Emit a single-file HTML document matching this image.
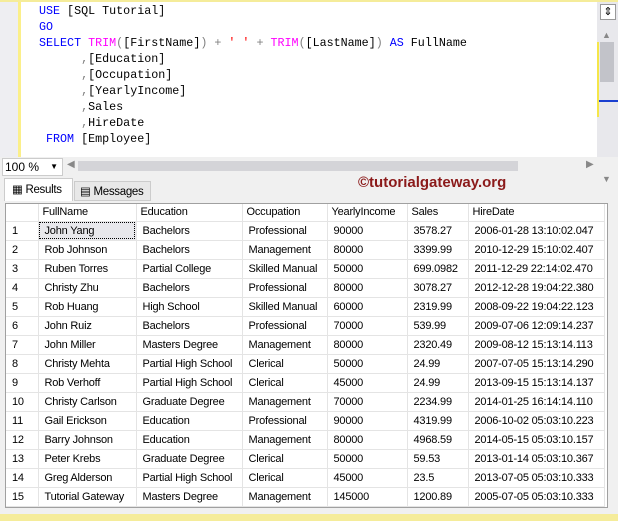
<!DOCTYPE html><html><head><style>
body{margin:0;width:618px;height:521px;overflow:hidden;background:#f0f0f0;font-family:"Liberation Sans",sans-serif;position:relative}
.ed{position:absolute;left:0;top:0;width:618px;height:157px;background:#fff;border-top:2px solid #f5ec9a;box-sizing:border-box}
.gut{position:absolute;left:0;top:0;width:18px;height:157px;background:#eeeef2}
.ybar{position:absolute;left:18px;top:0;width:3px;height:157px;background:#fbef8a}
.code{position:absolute;left:39px;top:1px;font:11.7px/16px "Liberation Mono",monospace;color:#000;white-space:pre}
.k{color:#0000ff}.f{color:#ff00ff}.g{color:#808080}.s{color:#ff0000}
.vs{position:absolute;left:597px;top:0;width:21px;height:157px;background:#e8e8ec}
.zb{position:absolute;top:157px;left:0;width:618px;height:19px;background:#f0f0f0}
.grid{position:absolute;left:5px;top:203px;width:603px;height:305px;background:#fff;border:1px solid #a0a0a0;box-sizing:border-box;overflow:hidden}
table{border-collapse:collapse;table-layout:fixed;width:598px;font-size:11px;letter-spacing:-0.2px;position:absolute;left:0;top:0}
td{height:19px;padding:0 0 0 6px;border-right:1px solid #e4e4e4;border-bottom:1px solid #e4e4e4;white-space:nowrap;overflow:hidden;box-sizing:border-box}
tr.h td{height:17px;padding-left:4px}
</style></head><body>
<div class="ed"><div class="gut"></div><div class="ybar"></div>
<div class="code"><span class="k">USE</span> [SQL Tutorial]
<span class="k">GO</span>
<span class="k">SELECT</span> <span class="f">TRIM</span><span class="g">(</span>[FirstName]<span class="g">)</span> <span class="g">+</span> <span class="s">' '</span> <span class="g">+</span> <span class="f">TRIM</span><span class="g">(</span>[LastName]<span class="g">)</span> <span class="k">AS</span> FullName
      <span class="g">,</span>[Education]
      <span class="g">,</span>[Occupation]
      <span class="g">,</span>[YearlyIncome]
      <span class="g">,</span>Sales
      <span class="g">,</span>HireDate
 <span class="k">FROM</span> [Employee]</div>
<div class="vs"><div style="position:absolute;left:3px;top:2px;width:14px;height:14px;border:1px solid #999;background:#fff;font-size:11px;text-align:center;line-height:14px">⇕</div>
<div style="position:absolute;left:5px;top:28px;font-size:9px;color:#888">▲</div>
<div style="position:absolute;left:3px;top:40px;width:14px;height:40px;background:#c2c3c9"></div>
<div style="position:absolute;left:0;top:40px;width:2px;height:75px;background:#f5e64a"></div>
<div style="position:absolute;left:2px;top:98px;width:19px;height:2px;background:#1a3fd0"></div>
<div style="position:absolute;left:5px;top:172px;font-size:9px;color:#888">▼</div></div>
</div>
<div class="zb"><div style="position:absolute;left:2px;top:1px;width:57px;height:16px;background:#fff;border:1px solid #ccc;font-size:12px;line-height:16px;padding-left:2px">100 %<span style="position:absolute;right:4px;font-size:8px">▼</span></div>
<div style="position:absolute;left:67px;top:2px;font-size:10px;color:#888">◀</div>
<div style="position:absolute;left:78px;top:4px;width:440px;height:10px;background:#d4d4d8"></div>
<div style="position:absolute;left:586px;top:2px;font-size:10px;color:#888">▶</div></div>
<div style="position:absolute;left:4px;top:178px;width:69px;height:23px;background:#fff;border:1px solid #ccc;border-bottom:none;font-size:11.5px;letter-spacing:-0.3px;line-height:22px;padding-left:7px;box-sizing:border-box">▦ Results</div>
<div style="position:absolute;left:74px;top:181px;width:77px;height:20px;background:#e8e8e8;border:1px solid #ccc;font-size:11.5px;letter-spacing:-0.3px;line-height:20px;padding-left:5px;box-sizing:border-box">▤ Messages</div>
<div style="position:absolute;left:358px;top:174px;font:bold 15px 'Liberation Sans',sans-serif;color:#8b1a1a">©tutorialgateway.org</div>
<div class="grid"><table>
<colgroup><col style="width:32px"><col style="width:98px"><col style="width:106px"><col style="width:85px"><col style="width:80px"><col style="width:61px"><col style="width:136px"></colgroup>
<tr class="h"><td></td><td>FullName</td><td>Education</td><td>Occupation</td><td>YearlyIncome</td><td>Sales</td><td>HireDate</td></tr>
<tr><td>1</td><td style="background:#e8e8ec;outline:1px dotted #000;outline-offset:-2px">John Yang</td><td>Bachelors</td><td>Professional</td><td>90000</td><td>3578.27</td><td>2006-01-28 13:10:02.047</td></tr>
<tr><td>2</td><td>Rob Johnson</td><td>Bachelors</td><td>Management</td><td>80000</td><td>3399.99</td><td>2010-12-29 15:10:02.407</td></tr>
<tr><td>3</td><td>Ruben Torres</td><td>Partial College</td><td>Skilled Manual</td><td>50000</td><td>699.0982</td><td>2011-12-29 22:14:02.470</td></tr>
<tr><td>4</td><td>Christy Zhu</td><td>Bachelors</td><td>Professional</td><td>80000</td><td>3078.27</td><td>2012-12-28 19:04:22.380</td></tr>
<tr><td>5</td><td>Rob Huang</td><td>High School</td><td>Skilled Manual</td><td>60000</td><td>2319.99</td><td>2008-09-22 19:04:22.123</td></tr>
<tr><td>6</td><td>John Ruiz</td><td>Bachelors</td><td>Professional</td><td>70000</td><td>539.99</td><td>2009-07-06 12:09:14.237</td></tr>
<tr><td>7</td><td>John Miller</td><td>Masters Degree</td><td>Management</td><td>80000</td><td>2320.49</td><td>2009-08-12 15:13:14.113</td></tr>
<tr><td>8</td><td>Christy Mehta</td><td>Partial High School</td><td>Clerical</td><td>50000</td><td>24.99</td><td>2007-07-05 15:13:14.290</td></tr>
<tr><td>9</td><td>Rob Verhoff</td><td>Partial High School</td><td>Clerical</td><td>45000</td><td>24.99</td><td>2013-09-15 15:13:14.137</td></tr>
<tr><td>10</td><td>Christy Carlson</td><td>Graduate Degree</td><td>Management</td><td>70000</td><td>2234.99</td><td>2014-01-25 16:14:14.110</td></tr>
<tr><td>11</td><td>Gail Erickson</td><td>Education</td><td>Professional</td><td>90000</td><td>4319.99</td><td>2006-10-02 05:03:10.223</td></tr>
<tr><td>12</td><td>Barry Johnson</td><td>Education</td><td>Management</td><td>80000</td><td>4968.59</td><td>2014-05-15 05:03:10.157</td></tr>
<tr><td>13</td><td>Peter Krebs</td><td>Graduate Degree</td><td>Clerical</td><td>50000</td><td>59.53</td><td>2013-01-14 05:03:10.367</td></tr>
<tr><td>14</td><td>Greg Alderson</td><td>Partial High School</td><td>Clerical</td><td>45000</td><td>23.5</td><td>2013-07-05 05:03:10.333</td></tr>
<tr><td>15</td><td>Tutorial Gateway</td><td>Masters Degree</td><td>Management</td><td>145000</td><td>1200.89</td><td>2005-07-05 05:03:10.333</td></tr>
</table></div>
<div style="position:absolute;left:0;top:514px;width:618px;height:7px;background:#f5ec9a"></div>
</body></html>
